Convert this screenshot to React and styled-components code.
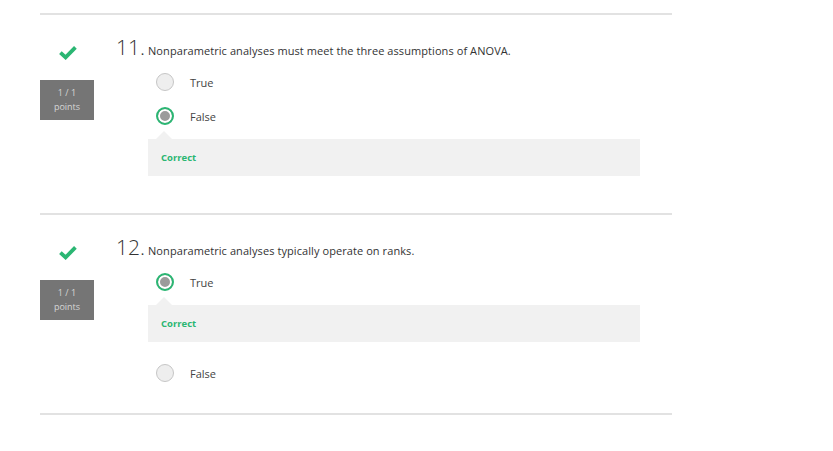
import styled, { createGlobalStyle } from "styled-components";

const GlobalStyle = createGlobalStyle`
  body {
    margin: 0;
    background: #fff;
    font-family: "Open Sans", "Liberation Sans", sans-serif;
  }
`;

const questions = [
  {
    num: 11,
    text: "Nonparametric analyses must meet the three assumptions of ANOVA.",
    options: ["True", "False"],
    selected: 1,
  },
  {
    num: 12,
    text: "Nonparametric analyses typically operate on ranks.",
    options: ["True", "False"],
    selected: 0,
  },
];

function CheckIcon() {
  return (
    <svg width="20" height="15" viewBox="0 0 20 15">
      <path
        d="M2.4 7.6 L7.6 12.4 L17.4 2.4"
        fill="none"
        stroke="#2bb673"
        strokeWidth="3.8"
        strokeLinejoin="miter"
      />
    </svg>
  );
}

function App() {
  return (
    <>
      <GlobalStyle />
      <Page>
        {questions.map((q) => (
          <Question key={q.num}>
            <Side>
              <CheckIcon />
              <Points>
                <span>1 / 1</span>
                <span>points</span>
              </Points>
            </Side>
            <Content>
              <Header>
                <Num>{q.num}.</Num>
                <Prompt>{q.text}</Prompt>
              </Header>
              <Answers>
                {q.options.map((opt, i) => (
                  <div key={opt}>
                    <Option>
                      <Radio $checked={i === q.selected} />
                      <Label>{opt}</Label>
                    </Option>
                    {i === q.selected && <Feedback>Correct</Feedback>}
                  </div>
                ))}
              </Answers>
            </Content>
          </Question>
        ))}
      </Page>
    </>
  );
}

const Page = styled.div`
  width: 632px;
  margin-left: 40px;
  padding-top: 13px;
  border-bottom: 2px solid #e2e2e2;
`;

const Question = styled.section`
  display: flex;
  gap: 22px;
  border-top: 2px solid #e2e2e2;
  padding: 19px 0 23px;
`;

const Side = styled.div`
  width: 54px;
  display: flex;
  flex-direction: column;
  align-items: center;
  padding-top: 11px;
  gap: 20px;
  svg {
    margin-left: 1px;
  }
`;

const Points = styled.div`
  width: 54px;
  height: 40px;
  background: #757575;
  color: #d6d6d6;
  font-size: 9px;
  line-height: 14px;
  display: flex;
  flex-direction: column;
  justify-content: center;
  align-items: center;
`;

const Content = styled.div`
  flex: 1;
  padding-right: 32px;
`;

const Header = styled.div`
  display: flex;
  align-items: baseline;
  height: 26px;
  line-height: 26px;
`;

const Num = styled.span`
  font-size: 21px;
  font-weight: 300;
  color: #333;
  width: 32px;
`;

const Prompt = styled.span`
  font-size: 11px;
  letter-spacing: 0.08px;
  color: #333;
`;

const Answers = styled.div`
  margin-top: 5px;
  margin-left: 32px;
`;

const Option = styled.div`
  height: 34px;
  display: flex;
  align-items: center;
  padding-left: 8px;
  gap: 16px;
`;

const Radio = styled.span`
  box-sizing: border-box;
  width: 18px;
  height: 18px;
  border-radius: 50%;
  background: ${(p) => (p.$checked ? "#9b9b9b" : "#eeeeee")};
  border: ${(p) => (p.$checked ? "2px solid #2bb673" : "1px solid #c6c6c6")};
  box-shadow: ${(p) => (p.$checked ? "inset 0 0 0 2px #fff" : "none")};
`;

const Label = styled.span`
  font-size: 11px;
  color: #444;
`;

const Feedback = styled.div`
  position: relative;
  margin: 6px 0 14px;
  height: 37px;
  background: #f1f1f1;
  display: flex;
  align-items: center;
  padding-left: 13px;
  font-size: 9.5px;
  font-weight: 700;
  color: #2bb673;
  &::before {
    content: "";
    position: absolute;
    top: -8px;
    left: 8px;
    border-left: 8px solid transparent;
    border-right: 8px solid transparent;
    border-bottom: 8px solid #f1f1f1;
  }
`;

export default App;
